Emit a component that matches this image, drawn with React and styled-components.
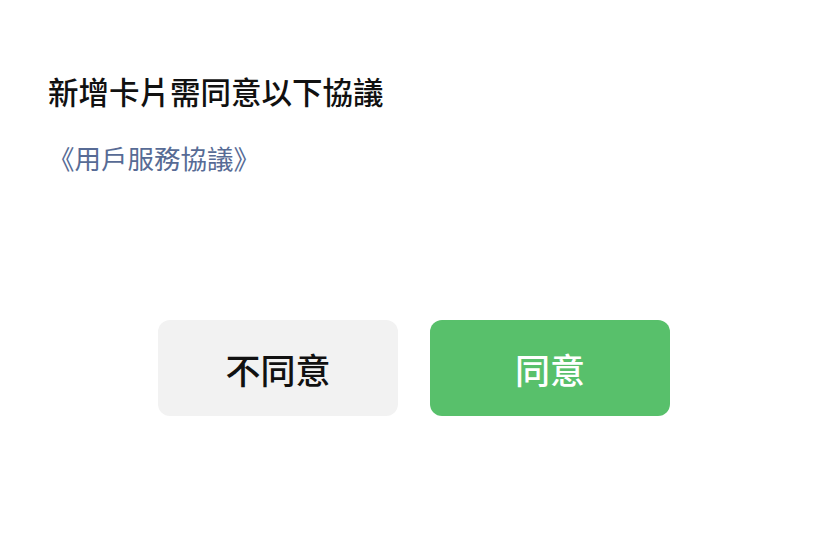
import React from 'react'
import styled, { createGlobalStyle } from 'styled-components'

const GlobalStyle = createGlobalStyle`
    html, body {
        margin: 0;
        padding: 0;
        background: #fff;
        font-family: "Noto Sans CJK TC", "Noto Sans", sans-serif;
    }
`

const Page = styled.div`
    width: 828px;
    height: 556px;
    box-sizing: border-box;
    padding: 70px 48px 0 48px;
    display: flex;
    flex-direction: column;
`

const Title = styled.h1`
    margin: 0;
    font-size: 30.5px;
    line-height: 42px;
    font-weight: 500;
    color: #111;
`

const AgreementLink = styled.a`
    margin-top: 27px;
    font-size: 26.5px;
    line-height: 38px;
    color: #576b95;
    text-decoration: none;
    cursor: pointer;
`

const ButtonRow = styled.div`
    margin-top: 143px;
    display: flex;
    justify-content: center;
    gap: 32px;
`

const Button = styled.button`
    width: 240px;
    height: 96px;
    border: none;
    border-radius: 12px;
    font-family: inherit;
    font-size: 35px;
    font-weight: 500;
    background: ${p => (p.primary ? '#58c06b' : '#f2f2f2')};
    color: ${p => (p.primary ? '#fff' : '#111')};
    cursor: pointer;
`

export default function App() {
    return (
        <>
            <GlobalStyle />
            <Page>
                <Title>新增卡片需同意以下協議</Title>
                <AgreementLink>《用戶服務協議》</AgreementLink>
                <ButtonRow>
                    <Button>不同意</Button>
                    <Button primary>同意</Button>
                </ButtonRow>
            </Page>
        </>
    )
}
